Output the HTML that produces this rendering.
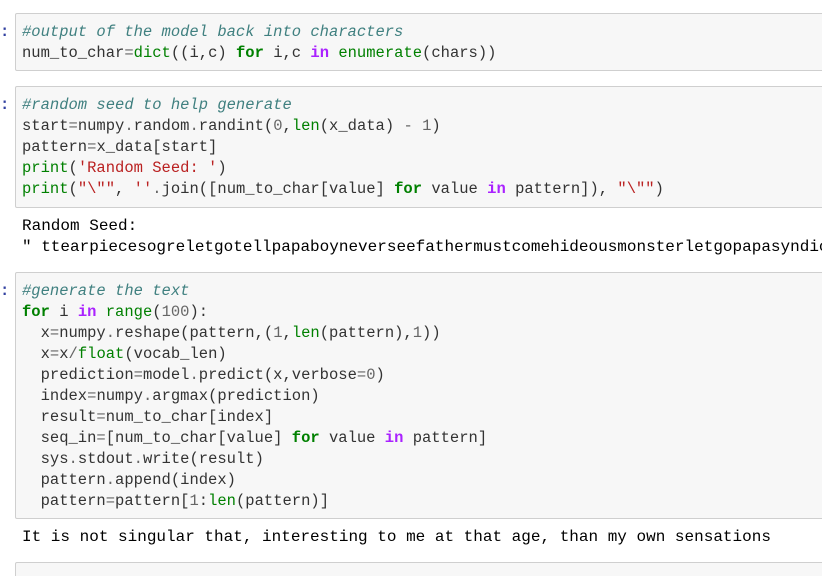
<!DOCTYPE html>
<html><head><style>
html,body{margin:0;padding:0;width:822px;height:576px;overflow:hidden;background:#fff;}
body{position:relative;font-family:"Liberation Mono",monospace;font-size:15.5px;}
.box{position:absolute;left:15px;width:830px;background:#f7f7f7;border:1px solid #cfcfcf;border-radius:2px;box-sizing:border-box;}
.t{position:absolute;left:22px;white-space:pre;line-height:21px;color:#333;}
.o{position:absolute;left:22px;white-space:pre;line-height:21px;color:#000;font-size:16px;}
.p{position:absolute;left:0;color:#303f9f;font-weight:bold;line-height:21px;}
.c{color:#408080;font-style:italic}
.k{color:#008000;font-weight:bold}
.i{color:#aa22ff;font-weight:bold}
.b{color:#008000}
.s{color:#ba2121}
.n{color:#666}
</style></head><body>
<div class="p" style="top:22px">:</div>
<div class="box" style="top:13px;height:58px"></div>
<div class="t" style="top:22px"><span class="c">#output of the model back into characters</span>
num_to_char<span class="n">=</span><span class="b">dict</span>((i,c) <span class="k">for</span> i,c <span class="i">in</span> <span class="b">enumerate</span>(chars))</div>

<div class="p" style="top:95px">:</div>
<div class="box" style="top:86px;height:122px"></div>
<div class="t" style="top:95px"><span class="c">#random seed to help generate</span>
start<span class="n">=</span>numpy<span class="n">.</span>random<span class="n">.</span>randint(<span class="n">0</span>,<span class="b">len</span>(x_data) <span class="n">-</span> <span class="n">1</span>)
pattern<span class="n">=</span>x_data[start]
<span class="b">print</span>(<span class="s">'Random Seed: '</span>)
<span class="b">print</span>(<span class="s">"\""</span>, <span class="s">''</span><span class="n">.</span>join([num_to_char[value] <span class="k">for</span> value <span class="i">in</span> pattern]), <span class="s">"\""</span>)</div>

<div class="o" style="top:216px">Random Seed:
" ttearpiecesogreletgotellpapaboyneverseefathermustcomehideousmonsterletgopapasyndicate</div>

<div class="p" style="top:281px">:</div>
<div class="box" style="top:272px;height:247px"></div>
<div class="t" style="top:281px"><span class="c">#generate the text</span>
<span class="k">for</span> i <span class="i">in</span> <span class="b">range</span>(<span class="n">100</span>):
  x<span class="n">=</span>numpy<span class="n">.</span>reshape(pattern,(<span class="n">1</span>,<span class="b">len</span>(pattern),<span class="n">1</span>))
  x<span class="n">=</span>x<span class="n">/</span><span class="b">float</span>(vocab_len)
  prediction<span class="n">=</span>model<span class="n">.</span>predict(x,verbose<span class="n">=0</span>)
  index<span class="n">=</span>numpy<span class="n">.</span>argmax(prediction)
  result<span class="n">=</span>num_to_char[index]
  seq_in<span class="n">=</span>[num_to_char[value] <span class="k">for</span> value <span class="i">in</span> pattern]
  sys<span class="n">.</span>stdout<span class="n">.</span>write(result)
  pattern<span class="n">.</span>append(index)
  pattern<span class="n">=</span>pattern[<span class="n">1</span>:<span class="b">len</span>(pattern)]</div>

<div class="o" style="top:527px">It is not singular that, interesting to me at that age, than my own sensations</div>

<div class="box" style="top:562px;height:40px"></div>
</body></html>
